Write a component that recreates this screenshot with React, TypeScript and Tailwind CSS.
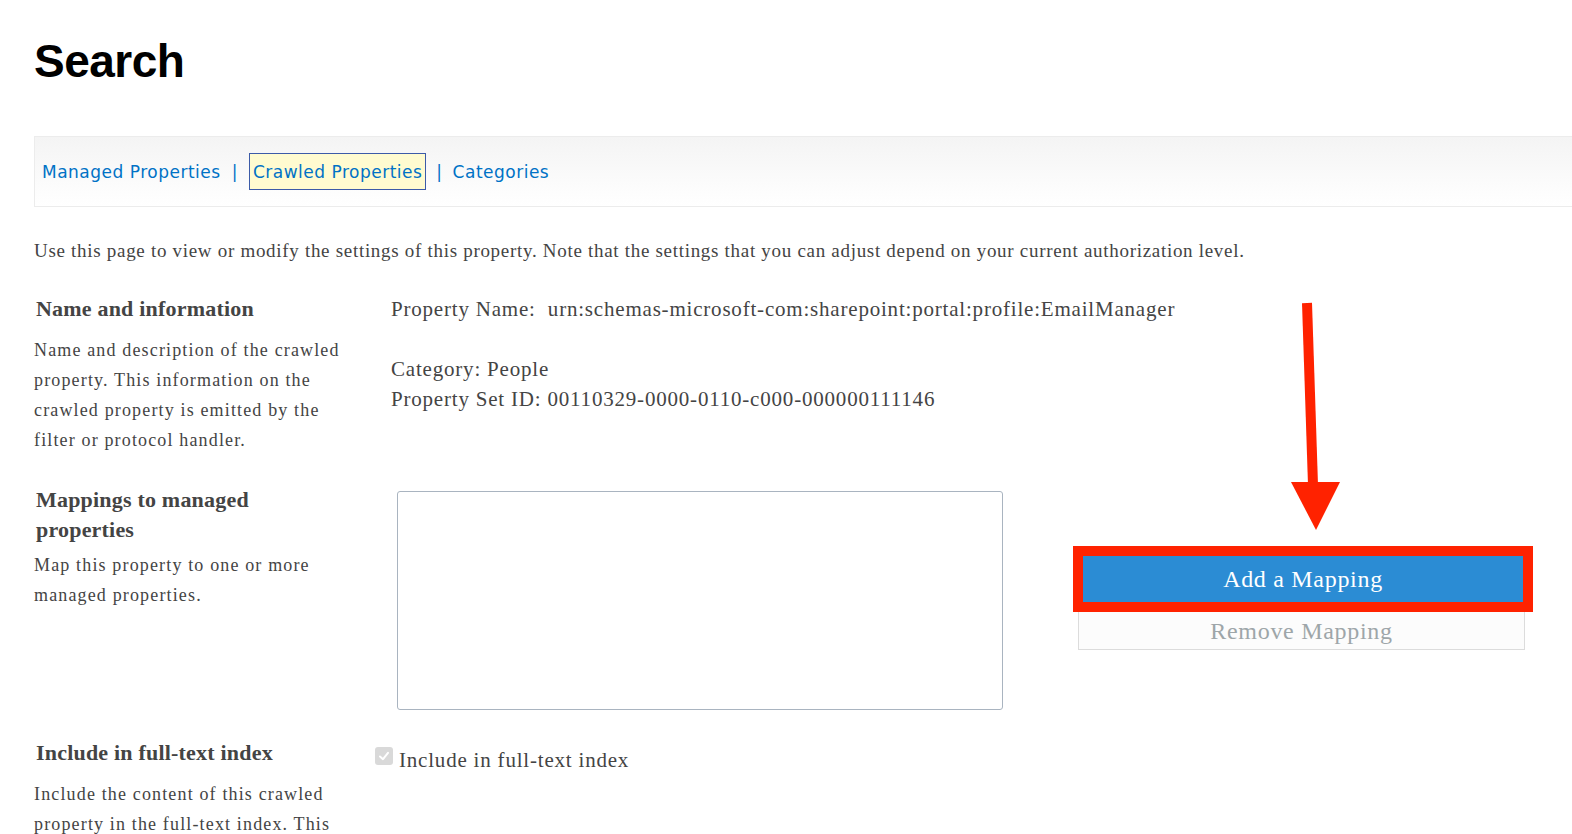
export default function App() {
  const serif = { fontFamily: '"Liberation Serif", "Times New Roman", serif' };
  return (
    <div className="relative h-[834px] overflow-hidden bg-white pl-[34px] text-[#444]" style={serif}>
      <h1
        className="pt-[38px] text-[46px] font-bold leading-none tracking-[-0.5px] text-black"
        style={{ fontFamily: '"Liberation Sans", Arial, sans-serif' }}
      >
        Search
      </h1>

      <nav
        className="mt-[52px] flex h-[71px] items-center border border-r-0 border-[#ececec] bg-gradient-to-b from-[#f4f4f4] to-white pl-[7px] text-[17px] tracking-[0.5px] text-[#0072c6]"
        style={{ fontFamily: '"DejaVu Sans", Verdana, sans-serif' }}
      >
        <a className="mt-[3px]">Managed Properties</a>
        <span className="mx-[11px] mt-[3px]">|</span>
        <a className="border border-[#3c5ba8] bg-[#fffbd0] px-[3px] pb-[6px] pt-[8px] leading-[21px]">Crawled Properties</a>
        <span className="mx-[10px] mt-[3px]">|</span>
        <a className="mt-[3px]">Categories</a>
      </nav>

      <p className="mt-[34px] text-[19px] leading-[20px] tracking-[0.7px]">
        Use this page to view or modify the settings of this property. Note that the settings that you can adjust depend on your current authorization level.
      </p>

      <div className="mt-[33px] grid grid-cols-[357px_1fr]">
        <div className="w-[312px]">
          <h3 className="pl-[2px] text-[22px] font-bold leading-[30px] tracking-[0.2px]">Name and information</h3>
          <p className="mt-[11px] text-[18px] leading-[30px] tracking-[1.15px]">
            Name and description of the crawled property. This information on the crawled property is emitted by the filter or protocol handler.
          </p>
        </div>
        <div className="text-[21px] leading-[30px] tracking-[0.8px]">
          <p>Property Name:&nbsp; urn:schemas-microsoft-com:sharepoint:portal:profile:EmailManager</p>
          <p className="mt-[30px]">Category: People</p>
          <p>Property Set ID: 00110329-0000-0110-c000-000000111146</p>
        </div>
      </div>

      <div className="mt-[30px] grid grid-cols-[357px_1fr]">
        <div className="w-[312px]">
          <h3 className="pl-[2px] text-[22px] font-bold leading-[30px] tracking-[0.2px]">Mappings to managed properties</h3>
          <p className="mt-[5px] text-[18px] leading-[30px] tracking-[1.15px]">
            Map this property to one or more managed properties.
          </p>
        </div>
        <div className="flex items-start">
          <div className="ml-[6px] mt-[6px] h-[219px] w-[606px] rounded-[3px] border border-[#a9b4c0] bg-white"></div>
          <div className="ml-[70px] mt-[61px] flex w-[460px] flex-col items-center">
            <div className="w-[460px] border-[10px] border-[#ff2200]">
              <button className="h-[46px] w-full bg-[#2b8cd4] text-[24px] tracking-[0.7px] text-white">
                Add a Mapping
              </button>
            </div>
            <button className="ml-[-3px] h-[38px] w-[447px] border border-t-0 border-[#dcdcdc] bg-[#fcfcfc] text-[24px] tracking-[0.7px] text-[#9ea6a9]">
              Remove Mapping
            </button>
          </div>
        </div>
      </div>

      <div className="mt-[28px] grid grid-cols-[341px_1fr]">
        <div className="w-[312px]">
          <h3 className="pl-[2px] text-[22px] font-bold leading-[30px] tracking-[0.2px]">Include in full-text index</h3>
          <p className="mt-[11px] text-[18px] leading-[30px] tracking-[1.15px]">
            Include the content of this crawled property in the full-text index. This property will be searchable.
          </p>
        </div>
        <label className="mt-[8px] flex h-[30px] items-center text-[21px] tracking-[0.8px]">
          <span className="mr-[6px] mt-[-10px] flex h-[18px] w-[18px] items-center justify-center rounded-[3px] bg-[#d9d9d9]">
            <svg width="12" height="12" viewBox="0 0 12 12" fill="none">
              <path d="M2 6.5 L5 9.2 L10 2.8" stroke="white" strokeWidth="2" strokeLinecap="round" strokeLinejoin="round" />
            </svg>
          </span>
          Include in full-text index
        </label>
      </div>

      <svg className="absolute left-[1280px] top-[295px]" width="70" height="245" viewBox="0 0 70 245">
        <path d="M27 8 L33 190" stroke="#ff2200" strokeWidth="10" />
        <path d="M11 187 L60 187 L36 235 Z" fill="#ff2200" />
      </svg>
    </div>
  );
}
